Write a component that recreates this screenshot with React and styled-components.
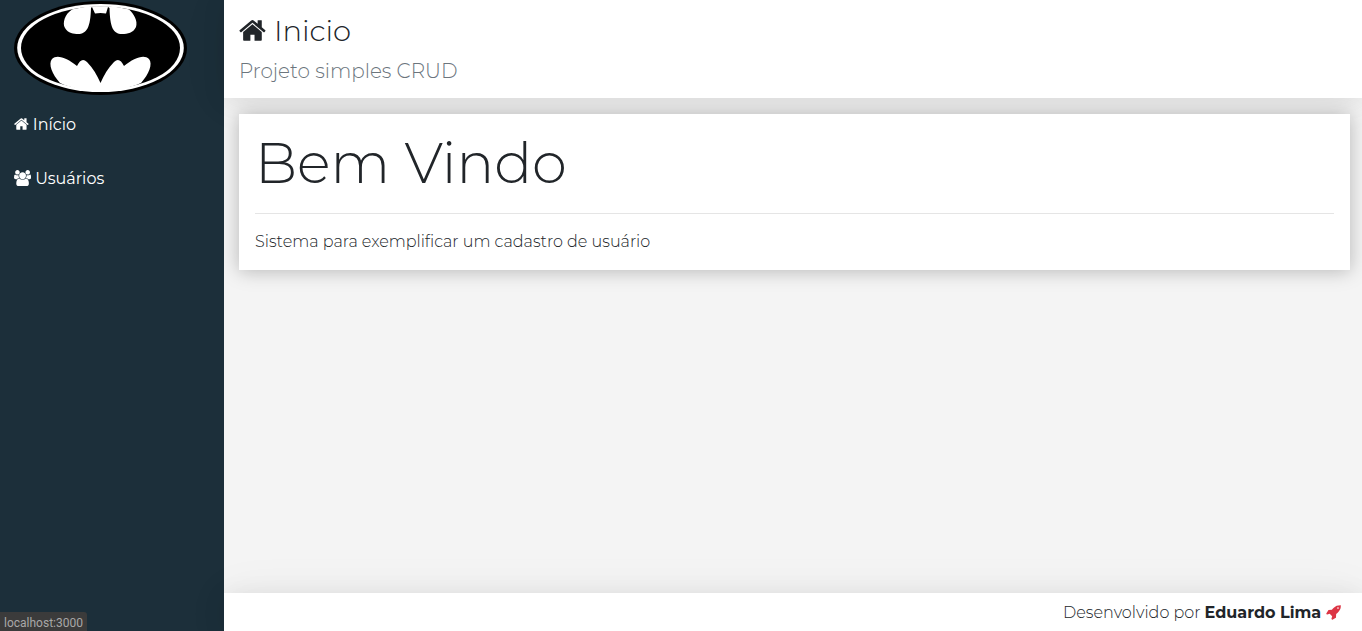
import React from 'react';
import styled, { createGlobalStyle, ThemeProvider } from 'styled-components';

const theme = {
  text: '#212529',
  muted: '#6c757d',
  danger: '#dc3545',
  sidebar: '#1c2f3a',
  page: '#f4f4f4',
  shadow: '0 2px 23px 0 rgba(0, 0, 0, 0.08), 0 2px 49px 0 rgba(0, 0, 0, 0.06)',
  cardShadow: '0 1px 18px 0 rgba(0, 0, 0, 0.26)',
};

const GlobalStyle = createGlobalStyle`
  *, *::before, *::after { box-sizing: border-box; }
  body {
    margin: 0;
    color: ${theme.text};
    font-family: Montserrat, Inter, sans-serif;
    font-size: 16px;
    font-weight: 300;
    line-height: 24px;
  }
`;

const Layout = styled.div`
  display: grid;
  grid-template-columns: 224px minmax(0, 1fr);
  grid-template-rows: auto 1fr auto;
  grid-template-areas: 'side header' 'side main' 'side footer';
  min-height: 100vh;
  background: ${({ theme }) => theme.page};
`;

const Sidebar = styled.aside`
  grid-area: side;
  background: ${({ theme }) => theme.sidebar};
`;

const LogoLink = styled.a`
  display: block;
  padding: 0 14px;
`;

const LogoArt = styled.svg`
  display: block;
  width: 174px;
  height: 97px;
`;

const Menu = styled.nav`
  display: flex;
  flex-direction: column;
`;

const MenuLink = styled.a`
  display: flex;
  align-items: center;
  gap: 4px;
  padding: 16px 14px 14px;
  color: #fff;
  font-weight: 400;
  text-decoration: none;
  &:hover { background: rgba(255, 255, 255, 0.03); }
`;

const Icon = styled.svg`
  flex: none;
  height: ${({ $size }) => $size}px;
  width: auto;
  margin-bottom: 2px;
  fill: currentColor;
`;

const Header = styled.header`
  grid-area: header;
  position: relative;
  padding: 14px 15px 12px;
  background: #fff;
  box-shadow: ${({ theme }) => theme.shadow};
`;

const PageTitle = styled.h1`
  display: flex;
  align-items: center;
  gap: 8px;
  margin: 0;
  font-size: 29px;
  font-weight: 300;
  line-height: 34px;
`;

const Subtitle = styled.p`
  margin: 8px 0 0;
  color: ${({ theme }) => theme.muted};
  font-size: 20px;
  line-height: 30px;
`;

const Content = styled.main`
  grid-area: main;
  position: relative;
  overflow: clip;
  padding: 16px 12px 16px 15px;
`;

const Card = styled.section`
  padding: 16px;
  background: #fff;
  box-shadow: ${({ theme }) => theme.cardShadow};
`;

const Welcome = styled.h2`
  margin: 0;
  font-size: 56px;
  font-weight: 300;
  line-height: 67px;
`;

const Divider = styled.hr`
  margin: 16px 0;
  border: 0;
  border-top: 1px solid #e5e5e5;
`;

const Description = styled.p`
  margin: 0;
`;

const Footer = styled.footer`
  grid-area: footer;
  display: flex;
  justify-content: flex-end;
  align-items: center;
  gap: 5px;
  padding: 8px 21px 6px;
  background: #fff;
  box-shadow: ${({ theme }) => theme.shadow};
  strong { font-weight: 700; }
  svg { color: ${({ theme }) => theme.danger}; }
`;

const StatusBubble = styled.div`
  position: fixed;
  left: 0;
  bottom: 0;
  z-index: 2;
  padding: 3px 4px 0;
  border-top-right-radius: 3px;
  background: #3b3b3b;
  color: #a8a8a8;
  font: 400 12px/16px Roboto, sans-serif;
`;

const HomeIcon = ({ size }) => (
  <Icon $size={size} viewBox="64 0 1664 1792" aria-hidden="true">
    <path d="M1472 992v480q0 26-19 45t-45 19h-384v-384h-256v384h-384q-26 0-45-19t-19-45v-480q0-1 .5-3t.5-3l575-474 575 474q1 2 1 6zm223-69l-62 74q-8 9-21 11h-3q-13 0-21-7l-692-577-692 577q-12 8-24 7-13-2-21-11l-62-74q-8-10-7-23.5t11-21.5l719-599q32-26 76-26t76 26l244 204v-195q0-14 9-23t23-9h192q14 0 23 9t9 23v408l219 182q10 8 11 21.5t-7 23.5z" />
  </Icon>
);

const UsersIcon = ({ size }) => (
  <Icon $size={size} viewBox="0 0 1920 1792" aria-hidden="true">
    <path d="M593 896q-162 5-265 128h-134q-82 0-138-40.5t-56-118.5q0-353 124-353 6 0 43.5 21t97.5 42.5 119 21.5q67 0 133-23-5 37-5 66 0 139 81 256zm1071 637q0 120-73 189.5t-194 69.5h-874q-121 0-194-69.5t-73-189.5q0-53 3.5-103.5t14-109 26.5-108.5 43-97.5 62-81 85.5-53.5 111.5-20q10 0 43 21.5t73 48 107 48 135 21.5 135-21.5 107-48 73-48 43-21.5q61 0 111.5 20t85.5 53.5 62 81 43 97.5 26.5 108.5 14 109 3.5 103.5zm-1024-1277q0 106-75 181t-181 75-181-75-75-181 75-181 181-75 181 75 75 181zm704 384q0 159-112.5 271.5t-271.5 112.5-271.5-112.5-112.5-271.5 112.5-271.5 271.5-112.5 271.5 112.5 112.5 271.5zm576 225q0 78-56 118.5t-138 40.5h-134q-103-123-265-128 81-117 81-256 0-29-5-66 66 23 133 23 59 0 119-21.5t97.5-42.5 43.5-21q124 0 124 353zm-128-609q0 106-75 181t-181 75-181-75-75-181 75-181 181-75 181 75 75 181z" />
  </Icon>
);

const RocketIcon = ({ size }) => (
  <Icon $size={size} viewBox="0 0 1664 1792" aria-hidden="true">
    <path d="M1440 448q0-40-28-68t-68-28-68 28-28 68 28 68 68 28 68-28 28-68zm224-288q0 249-75.5 430.5t-253.5 360.5q-81 80-195 176l-20 379q-2 16-16 26l-384 224q-7 4-16 4-12 0-23-9l-64-64q-13-14-8-32l85-276-281-281-276 85q-3 1-9 1-14 0-23-9l-64-64q-17-19-5-39l224-384q10-14 26-16l379-20q96-114 176-195 188-187 358-258t431-71q14 0 24 9.5t10 22.5z" />
  </Icon>
);

const BatLogo = () => (
  <LogoArt viewBox="14 0 174 97" role="img" aria-label="Logo">
    <ellipse cx="100.5" cy="48" rx="86.5" ry="47" fill="#000" />
    <ellipse cx="100.5" cy="48" rx="83.3" ry="44" fill="#fff" />
    <ellipse cx="100.5" cy="48" rx="79.5" ry="41.5" fill="#000" />
    <path
      fill="#fff"
      d="M72 9.500C65 14 62 23 65 28C68 33.500 74 34 78 34C87 34 90.500 27 91 8L92 7L95 13.500Q100.500 12.500 106 13.500L108 7L109.500 8C110 27 113 34 122 34C128 34 133 33 136 27C138 21 134 14 129 9.500C115 5 86 5 72 9.500Z"
    />
    <path
      fill="#fff"
      d="M60 83C52 74 48 64 52 59C57 54 67 58 77 66C80 60 83 58 87 62C93 68 97 75 100.500 83C104 75 108 68 114 62C118 58 121 60 124 66C134 58 144 54 149 59C153 64 149 74 141 83C120 93 80 93 60 83Z"
    />
  </LogoArt>
);

export default function App() {
  return (
    <ThemeProvider theme={theme}>
      <GlobalStyle />
      <Layout>
        <Sidebar>
          <LogoLink href="/" aria-label="Início"><BatLogo /></LogoLink>
          <Menu>
            <MenuLink href="#/"><HomeIcon size={16} />Início</MenuLink>
            <MenuLink href="#/users"><UsersIcon size={16} />Usuários</MenuLink>
          </Menu>
        </Sidebar>
        <Header>
          <PageTitle><HomeIcon size={29} />Inicio</PageTitle>
          <Subtitle>Projeto simples CRUD</Subtitle>
        </Header>
        <Content>
          <Card>
            <Welcome>Bem Vindo</Welcome>
            <Divider />
            <Description>Sistema para exemplificar um cadastro de usuário</Description>
          </Card>
        </Content>
        <Footer>
          <span>Desenvolvido por <strong>Eduardo Lima</strong></span>
          <RocketIcon size={16} />
        </Footer>
      </Layout>
      <StatusBubble>localhost:3000</StatusBubble>
    </ThemeProvider>
  );
}
